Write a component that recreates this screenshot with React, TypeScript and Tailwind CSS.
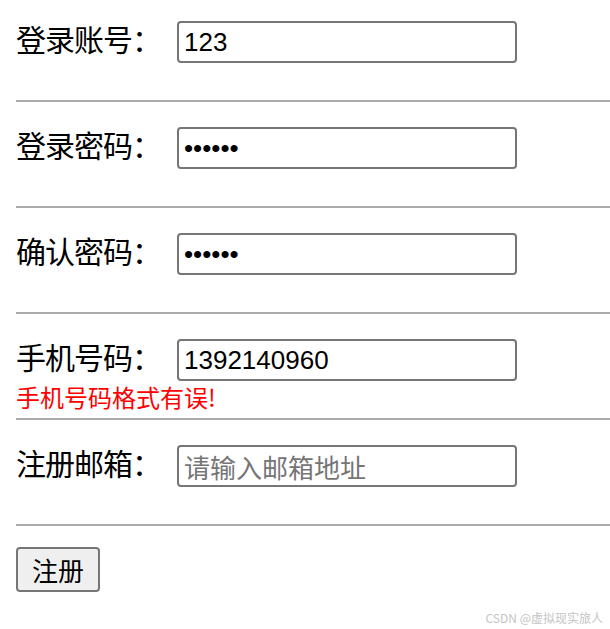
import { useState } from "react";

const cjk = "font-['Microsoft_YaHei','Noto_Sans_CJK_SC',sans-serif]";
const latin = "font-['Liberation_Sans','Noto_Sans_CJK_SC',sans-serif]";

type Field = {
  label: string;
  type: string;
  value: string;
  placeholder?: string;
  error?: string;
};

const fields: Array<Field> = [
  { label: "登录账号：", type: "text", value: "123" },
  { label: "登录密码：", type: "password", value: "123456" },
  { label: "确认密码：", type: "password", value: "123456" },
  {
    label: "手机号码：",
    type: "text",
    value: "1392140960",
    error: "手机号码格式有误!",
  },
  { label: "注册邮箱：", type: "text", value: "", placeholder: "请输入邮箱地址" },
];

const App = () => {
  const [values, setValues] = useState(fields.map((f) => f.value));

  return (
    <div className="relative min-h-[629px] bg-white pl-4 pt-[21px]">
      {fields.map((field, index) => (
        <div key={index} className="mb-[25px]">
          <div className="flex h-[42px] items-center">
            <span
              className={`${cjk} mb-[8px] w-[161px] shrink-0 text-[30px] leading-[36px] tracking-[-1px] text-black`}
            >
              {field.label}
            </span>
            <input
              type={field.type}
              value={values[index]}
              placeholder={field.placeholder}
              onChange={(e) => {
                const next = [...values];
                next[index] = e.target.value;
                setValues(next);
              }}
              className={`${field.placeholder ? cjk : latin} h-[42px] w-[340px] rounded-[4px] border-2 border-[#767676] bg-white px-[5px] text-[26px] text-black outline-none placeholder:text-[#757575]`}
            />
          </div>
          <div className="h-[37px] pt-px">
            {field.error && (
              <p className={`${cjk} text-[24px] leading-[30px] text-[#ff0000]`}>
                {field.error}
              </p>
            )}
          </div>
          <div className="h-[2px] bg-[#aaaaaa]" />
        </div>
      ))}
      <button
        type="button"
        className={`${cjk} -mt-[4px] h-[45px] w-[84px] rounded-[4px] border-2 border-[#767676] bg-[#efefef] text-[26px] leading-none text-black`}
      >
        注册
      </button>
      <span
        className={`${cjk} absolute bottom-[2px] right-[7px] text-[12px] text-[#c4c4c4]`}
      >
        CSDN @虚拟现实旅人
      </span>
    </div>
  );
};

export default App;
